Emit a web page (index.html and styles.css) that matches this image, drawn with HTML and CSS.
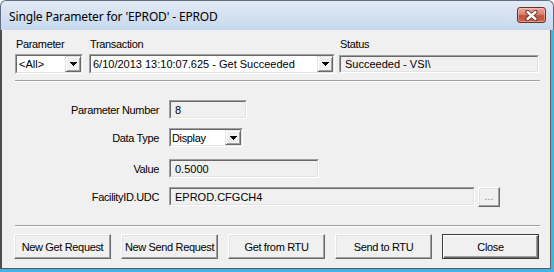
FILE: index.html
```html
<!DOCTYPE html>
<html>
<head>
<meta charset="utf-8">
<link rel="stylesheet" href="styles.css">
</head>
<body>
<div class="window">
  <div class="titlebar">
    <span class="title">Single Parameter for 'EPROD' - EPROD</span>
    <div class="close-btn">
      <svg width="13" height="11" viewBox="0 0 13 11">
        <path d="M2.5 2 L10.5 9 M10.5 2 L2.5 9" stroke="#5b2a22" stroke-width="4.2" stroke-linecap="round" fill="none"/>
        <path d="M2.5 2 L10.5 9 M10.5 2 L2.5 9" stroke="#ffffff" stroke-width="2.4" stroke-linecap="round" fill="none"/>
      </svg>
    </div>
  </div>
  <div class="frame">
    <div class="client">
      <div class="top-row">
        <div class="field w-param">
          <div class="lbl">Parameter</div>
          <div class="sunken combo"><div class="in"><span class="ctext">&lt;All&gt;</span><span class="drop"><svg width="7" height="4" viewBox="0 0 7 4" shape-rendering="crispEdges"><path d="M0 0h7v1h-1v1h-1v1h-1v1h-1v-1h-1v-1h-1v-1h-1z" fill="#000"/></svg></span></div></div>
        </div>
        <div class="field w-trans">
          <div class="lbl">Transaction</div>
          <div class="sunken combo"><div class="in"><span class="ctext">6/10/2013 13:10:07.625 - Get Succeeded</span><span class="drop"><svg width="7" height="4" viewBox="0 0 7 4" shape-rendering="crispEdges"><path d="M0 0h7v1h-1v1h-1v1h-1v1h-1v-1h-1v-1h-1v-1h-1z" fill="#000"/></svg></span></div></div>
        </div>
        <div class="field w-status">
          <div class="lbl">Status</div>
          <div class="sunken tbox"><div class="in"><span class="ttext">Succeeded - VSI\</span></div></div>
        </div>
      </div>
      <div class="sep sep-top"></div>
      <div class="form">
        <div class="row">
          <div class="rlbl">Parameter Number</div>
          <div class="sunken tbox w-pnum"><div class="in"><span class="ttext">8</span></div></div>
        </div>
        <div class="row r-gap9">
          <div class="rlbl">Data Type</div>
          <div class="sunken combo w-dtype"><div class="in"><span class="ctext ct-narrow">Display</span><span class="drop"><svg width="7" height="4" viewBox="0 0 7 4" shape-rendering="crispEdges"><path d="M0 0h7v1h-1v1h-1v1h-1v1h-1v-1h-1v-1h-1v-1h-1z" fill="#000"/></svg></span></div></div>
        </div>
        <div class="row r-gap12">
          <div class="rlbl">Value</div>
          <div class="sunken tbox w-value"><div class="in"><span class="ttext">0.5000</span></div></div>
        </div>
        <div class="row r-gap9 r-fac">
          <div class="rlbl">FacilityID.UDC</div>
          <div class="sunken tbox w-fac"><div class="in"><span class="ttext">EPROD.CFGCH4</span></div></div>
          <div class="btn dots">...</div>
        </div>
      </div>
      <div class="sep sep-bottom"></div>
      <div class="buttons">
        <div class="btn">New Get Request</div>
        <div class="btn">New Send Request</div>
        <div class="btn">Get from RTU</div>
        <div class="btn">Send to RTU</div>
        <div class="btn default">Close</div>
      </div>
    </div>
  </div>
</div>
</body>
</html>
```
FILE: styles.css
```css
* { box-sizing: border-box; }
html, body { margin: 0; padding: 0; background: #ffffff; }
body {
  width: 554px;
  height: 272px;
  overflow: hidden;
  font-family: "Liberation Sans", Arial, sans-serif;
  font-size: 11px;
  letter-spacing: -0.35px;
  color: #000;
}
.window {
  width: 554px;
  height: 272px;
  display: flex;
  flex-direction: column;
}
.titlebar {
  height: 30px;
  flex: none;
  display: flex;
  align-items: center;
  justify-content: space-between;
  padding: 0 7px 0 8px;
  background: linear-gradient(#e2ebf6, #c7d8ec);
  border: 1px solid #5f6e82;
  border-bottom: none;
  border-radius: 6px 6px 0 0;
}
.title {
  font-family: "Noto Sans", "Open Sans", sans-serif;
  font-size: 12px;
  letter-spacing: -0.15px;
  color: #000;
  margin-top: 1px;
}
.close-btn {
  width: 29px;
  height: 16px;
  margin-top: -1px;
  border: 1px solid #6c2f25;
  border-radius: 3px;
  background: linear-gradient(#e9ab9d 0%, #d9816f 45%, #c4503a 55%, #c8644c 100%);
  box-shadow: inset 0 0 0 1px rgba(255, 220, 210, 0.45);
  display: flex;
  align-items: center;
  justify-content: center;
}
.frame {
  flex: 1;
  display: flex;
  background: #41b4e8;
  padding: 0 3px 3px 0;
}
.client {
  flex: 1;
  display: flex;
  flex-direction: column;
  background: #f0f0f0;
  border-left: 2px solid #4d4d4d;
  border-right: 1px solid #5a5a5a;
  border-bottom: 1px solid #5a5a5a;
  padding: 8px 10px 9px 13px;
}
.top-row {
  display: flex;
}
.field { display: flex; flex-direction: column; }
.w-param { width: 68px; }
.w-trans { width: 246px; margin-left: 6px; }
.w-status { width: 200px; margin-left: 4px; }
.lbl {
  height: 13px;
  line-height: 13px;
  margin-bottom: 3px;
  padding-left: 1px;
}
.sunken {
  border: 1px solid;
  border-color: #a0a0a0 #ffffff #ffffff #a0a0a0;
}
.sunken > .in {
  height: 100%;
  display: flex;
  align-items: center;
  border: 1px solid;
  border-color: #696969 #e3e3e3 #e3e3e3 #696969;
  white-space: nowrap;
  overflow: hidden;
  letter-spacing: 0;
}
.combo { height: 20px; }
.combo > .in { background: #ffffff; }
.tbox { height: 19px; }
.tbox > .in { background: #f0f0f0; }
.w-status .tbox { height: 18px; margin-top: 1px; }
.ctext { padding-left: 2px; flex: 1; overflow: hidden; }
.ct-narrow { padding-left: 1px; letter-spacing: -0.35px; }
.ttext { padding-left: 4px; }
.drop {
  flex: none;
  width: 16px;
  height: 100%;
  display: flex;
  align-items: center;
  justify-content: center;
  background: #f0f0f0;
  border: 1px solid;
  border-color: #e3e3e3 #696969 #696969 #e3e3e3;
  box-shadow: inset 1px 1px #ffffff, inset -1px -1px #a0a0a0;
}
.drop svg { display: block; }
.sep {
  height: 2px;
  border-top: 1px solid #a0a0a0;
  border-bottom: 1px solid #ffffff;
}
.sep-top { margin-top: 6px; }
.form {
  margin-top: 18px;
  display: flex;
  flex-direction: column;
}
.row {
  display: flex;
  align-items: center;
}
.r-gap9 { margin-top: 9px; }
.r-gap12 { margin-top: 12px; }
.rlbl {
  width: 144px;
  margin-right: 10px;
  text-align: right;
}
.w-pnum { width: 78px; }
.w-dtype { width: 74px; height: 19px; }
.w-value { width: 150px; }
.w-fac { width: 306px; }
.r-fac { height: 20px; align-items: flex-start; }
.r-fac .rlbl { align-self: center; }
.btn {
  height: 25px;
  display: flex;
  align-items: center;
  justify-content: center;
  background: #f0f0f0;
  border: 1px solid;
  border-color: #ffffff #696969 #696969 #ffffff;
  box-shadow: inset -1px -1px #a0a0a0, inset 1px 1px #e3e3e3;
  white-space: nowrap;
}
.dots {
  width: 22px;
  height: 20px;
  margin-left: 3px;
  color: #8a8a8a;
  padding-bottom: 2px;
  letter-spacing: 0;
}
.sep-bottom { margin-top: 18px; }
.buttons {
  margin-top: 7px;
  display: flex;
  gap: 10px;
  margin-left: -1px;
}
.buttons .btn { width: 97px; }
.btn.default {
  border: 1px solid #3c3c3c;
  box-shadow: inset 1px 1px #ffffff, inset -1px -1px #696969, inset -2px -2px #a0a0a0;
}
```
